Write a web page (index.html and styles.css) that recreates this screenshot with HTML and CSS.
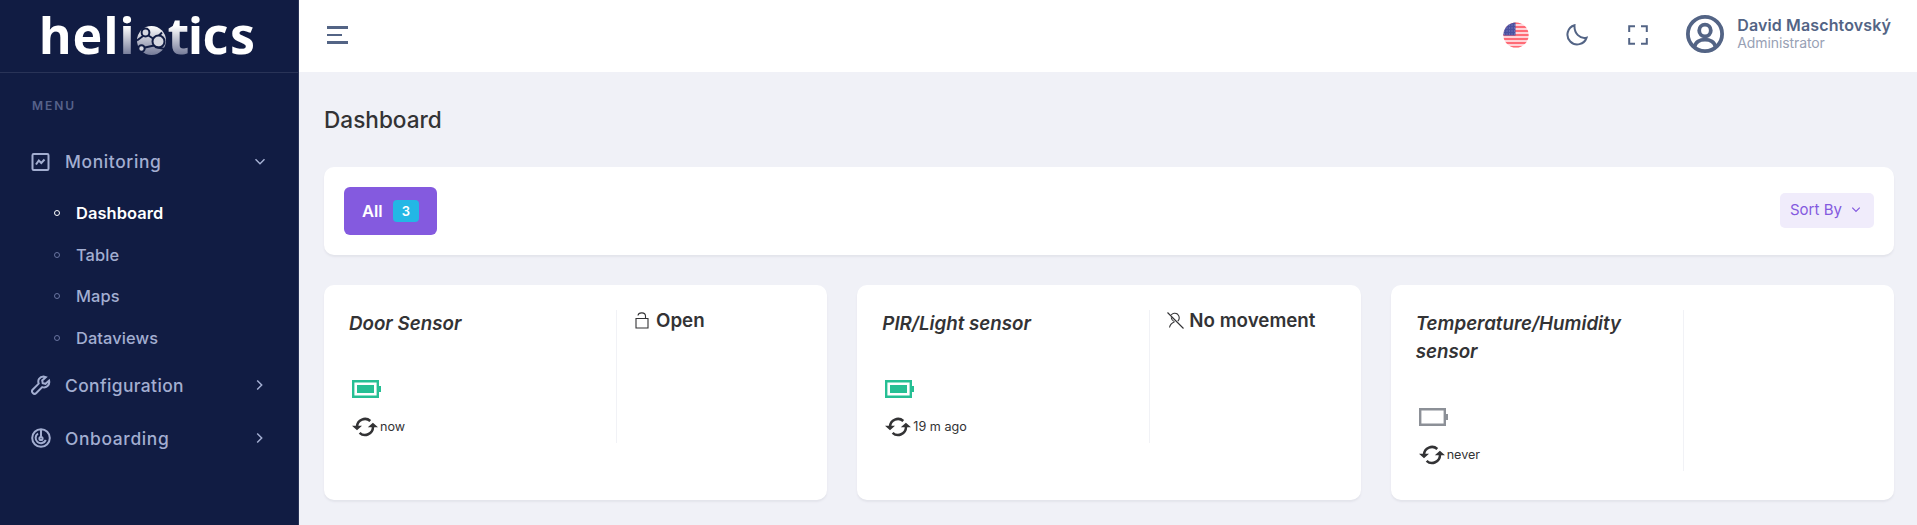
FILE: index.html
```html
<!DOCTYPE html>
<html lang="en">
<head>
<meta charset="utf-8">
<title>Heliotics Dashboard</title>
<link rel="stylesheet" href="styles.css">
</head>
<body>
<svg width="0" height="0" class="sprite" aria-hidden="true">
  <symbol id="chev" viewBox="0 0 12 12"><path d="M3.2 1.5 7.7 6 3.2 10.5" fill="none" stroke="currentColor" stroke-width="1.5"/></symbol>
  <symbol id="refresh" viewBox="0 0 26 20">
    <path d="M5 9.500A8 8 0 0 1 18.300 4M21 10A8 8 0 0 1 7.600 15.800" fill="none" stroke="currentColor" stroke-width="2.500"/>
    <path d="M0 8.800h10L5 13.200zM15.800 10.200h10.200L20.900 5.800z" fill="currentColor"/>
  </symbol>
  <symbol id="battery" viewBox="0 0 29 18"><path d="M1.200 1.200h24.600v15.600H1.200z" fill="none" stroke="currentColor" stroke-width="2.400"/><path d="M26 6h3v6h-3z" fill="currentColor"/></symbol>
</svg>
<div class="app">
  <aside class="sidebar">
    <div class="brand">
      <svg width="224" height="72" viewBox="36 0 224 72" class="logo">
        <defs><linearGradient id="fade" gradientUnits="userSpaceOnUse" x1="0" y1="26" x2="0" y2="55"><stop offset="0" stop-color="#fff"/><stop offset="1" stop-color="#747a98"/></linearGradient></defs>
        <text y="54" x="39 72.500 103.500">hel</text>
        <text y="54" x="119.500" fill="url(#fade)">i</text>
        <circle cx="151.500" cy="40.500" r="14.500" fill="url(#fade)"/>
        <g class="cells"><circle cx="145.500" cy="32.500" r="3.900"/><circle cx="158.500" cy="41.500" r="6"/><circle cx="141.500" cy="48.500" r="3.200"/><path d="M148.500 35.500 153 38.500M145 47.500 154 45.500M137 40.500 143 36M159 35.500 162 32.500M155 47 165 49" /></g>
        <text y="54" x="167.500" fill="url(#fade)">t</text>
        <text y="54" x="188 202.500 230">ics</text>
      </svg>
    </div>
    <nav class="menu">
      <div class="menu-title">MENU</div>
      <a class="item"><svg width="20" height="20" viewBox="0 0 20 20" class="ic"><rect x="1.500" y="2" width="16" height="16" rx="1.200"/><path d="M5 12.500 7.800 8.500 10.300 11 13.500 7.500"/></svg><span class="wide">Monitoring</span><svg class="arrow down" width="12" height="12"><use href="#chev"/></svg></a>
      <div class="sub">
        <a class="on"><i></i><span>Dashboard</span></a>
        <a><i></i><span>Table</span></a>
        <a><i></i><span>Maps</span></a>
        <a><i></i><span>Dataviews</span></a>
      </div>
      <a class="item"><svg width="20" height="20" viewBox="0 0 20 20" class="ic"><path d="M12.500 1.500C8.500 1.500 6.400 5.300 7.700 8.600L1.800 14.500a2.400 2.400 0 0 0 3.500 3.500l5.900-5.900c4 1.400 7.900-2.100 6.900-6.500l-3.600 3.200-2.800-.6-.5-2.800 3.600-3.200z"/></svg><span>Configuration</span><svg class="arrow" width="12" height="12"><use href="#chev"/></svg></a>
      <a class="item"><svg width="20" height="20" viewBox="0 0 20 20" class="ic"><circle cx="10" cy="10" r="8.800"/><path d="M10 1.500V10M7 5.500A5.300 5.300 0 1 0 14.800 12"/><circle cx="10" cy="10.500" r="1.600"/></svg><span class="wide">Onboarding</span><svg class="arrow" width="12" height="12"><use href="#chev"/></svg></a>
    </nav>
  </aside>
  <div class="main">
    <header class="topbar">
      <svg class="burger" width="21" height="18"><path d="M0 0h21v3H0zM0 8h15v2H0zM0 15h21v3H0z"/></svg>
      <div class="tools">
        <svg width="26" height="26" viewBox="0 0 26 26" class="flag"><defs><clipPath id="disc"><circle cx="13" cy="13" r="12.600"/></clipPath></defs><g clip-path="url(#disc)"><path d="M0 0h26v26H0z" fill="#ffd3d8"/><path d="M0 1h26M0 5h26M0 9h26M0 13h26M0 17h26M0 21h26M0 25h26" stroke="#ff6b76" stroke-width="2"/><path d="M0 0h12.500v13.500H0z" fill="#4b50a0"/><path d="M1 3h11M1 6h11M1 9h11M1 12h11" stroke="#8588c4" stroke-dasharray="1 1.500"/></g></svg>
        <svg width="22" height="22" viewBox="0 0 22 22" class="moon"><path d="M8.500 1.200A9.800 9.800 0 1 0 20.600 13.600C14 15.300 8 9.500 8.500 1.200z"/></svg>
        <svg width="20" height="20" viewBox="0 0 20 20" class="full"><path d="M1.200 7V1.200H7M13 1.200h5.800V7M18.800 13v5.800H13M7 18.800H1.200V13"/></svg>
        <svg width="38" height="38" viewBox="0 0 38 38" class="avatar"><circle cx="19" cy="19" r="17.100"/><circle cx="19" cy="15.500" r="5.800"/><path d="M8.500 32c1-5 5.500-7.300 10.500-7.300S28.500 27 29.500 32"/></svg>
        <div class="user"><b>David Maschtovský</b><span>Administrator</span></div>
      </div>
    </header>
    <main class="content">
      <h1>Dashboard</h1>
      <section class="card filters">
        <button class="all">All<span>3</span></button>
        <button class="sort">Sort By<svg width="10" height="10" class="down"><use href="#chev"/></svg></button>
      </section>
      <div class="cards">
        <section class="card device">
          <div class="left"><h2>Door Sensor</h2><svg class="bat ok" width="29" height="18"><use href="#battery"/><path d="M5 5h17v8H5z"/></svg><div class="seen"><svg width="26" height="20"><use href="#refresh"/></svg><span>now</span></div></div>
          <div class="right"><svg width="14" height="17" viewBox="0 0 14 17"><path d="M1 6.500h12v9.500H1zM3 3.500C3.500-.1 10.500-.1 10.500 4v2.500"/></svg><span>Open</span></div>
        </section>
        <section class="card device">
          <div class="left"><h2>PIR/Light sensor</h2><svg class="bat ok" width="29" height="18"><use href="#battery"/><path d="M5 5h17v8H5z"/></svg><div class="seen"><svg width="26" height="20"><use href="#refresh"/></svg><span>19 m ago</span></div></div>
          <div class="right person"><svg width="17" height="17" viewBox="0 0 17 17"><path d="M.5.500 16.500 16.500M4.200 3C5.500 1 8.500.500 10.700 2.300 13 4.500 12.500 7.500 10.800 9M4.200 5.500C4.500 8 6 9 7.500 9.700M7.500 9.700C4.500 11 3 12.500 2.500 15.500"/></svg><span>No movement</span></div>
        </section>
        <section class="card device">
          <div class="left"><h2>Temperature/Humidity sensor</h2><svg class="bat" width="29" height="18"><use href="#battery"/></svg><div class="seen"><svg width="26" height="20"><use href="#refresh"/></svg><span>never</span></div></div>
          <div class="right"></div>
        </section>
      </div>
    </main>
  </div>
</div>
</body>
</html>
```
FILE: styles.css
```css
* { box-sizing: border-box; }
body { margin: 0; background: #f0f1f7; color: #333335; font-family: Inter, "Liberation Sans", sans-serif; overflow: hidden; }
svg { display: block; flex: none; }
.sprite { position: absolute; }
.app { display: flex; height: 525px; }
.sidebar { width: 299px; flex: none; background: #111c43; border-right: 1px solid #293357; }
.brand { height: 73px; border-bottom: 1px solid #293357; padding-left: 36px; }
.logo { overflow: visible; }
.logo text { font: 700 50px/1 "Noto Sans", sans-serif; fill: #fff; }
.logo text[fill] { fill: url(#fade); }
.cells { stroke: #111c43; stroke-width: 2; fill: #d5d7e0; }
.menu { color: #a3aed1; padding-top: 23px; }
.menu-title { font-size: 12px; font-weight: 600; line-height: 20px; letter-spacing: 1.9px; color: #57628a; padding-left: 32px; margin-bottom: 19px; }
.item { display: flex; align-items: center; height: 53px; padding: 0 32px 0 31px; font-size: 17.4px; font-weight: 450; letter-spacing: .4px; }
.item span { margin-left: 14px; flex: 1; }
.item .wide { letter-spacing: .65px; }
.ic { fill: none; stroke: currentColor; stroke-width: 2; }
.down { transform: rotate(90deg); }
.sub { padding: 24px 0 0; margin-top: -20px; }
.sub a { display: flex; align-items: center; height: 41.7px; padding-left: 54px; font-size: 16.4px; font-weight: 450; letter-spacing: .1px; }
.sub i { width: 6px; height: 6px; border: 1px solid #6974a0; border-radius: 50%; margin-right: 16px; }
.sub .on { color: #fff; font-weight: 600; }
.sub .on i { border-color: #fff; }
.main { flex: 1; min-width: 0; }
.topbar { height: 72px; background: #fff; display: flex; align-items: center; justify-content: space-between; padding: 0 26px 0 28px; color: #536485; }
.burger { fill: currentColor; margin-top: -2px; }
.tools { display: flex; align-items: center; margin-top: -2px; }
.moon, .full, .avatar { fill: none; stroke: currentColor; stroke-width: 2; }
.avatar { stroke-width: 3.8; }
.moon { margin-left: 37px; }
.full { margin-left: 40px; }
.avatar { margin: -3px 13px 0 38px; }
.user { display: flex; flex-direction: column; margin-top: -3px; }
.user b { font-size: 16px; font-weight: 600; line-height: 18px; letter-spacing: .12px; }
.user span { font-size: 14px; line-height: 17px; color: #98a1b5; letter-spacing: -.1px; }
.content { padding: 0 23px 0 25px; }
h1 { font-size: 22.6px; font-weight: 540; line-height: 32px; margin: 32px 0 31px; }
.card { background: #fff; border-radius: 10px; box-shadow: 0 2px 2px #e3e4eb; }
.filters { height: 88px; display: flex; align-items: center; justify-content: space-between; padding: 0 20px; }
button { border: 0; font-family: inherit; display: flex; align-items: center; }
.all { width: 93px; height: 48px; border-radius: 6px; background: #845adf; color: #fff; font-size: 16.5px; font-weight: 600; padding: 0 18px 1px; justify-content: space-between; }
.all span { width: 26px; height: 22px; line-height: 22px; border-radius: 4px; background: #23b7e5; font-size: 13px; text-align: center; }
.sort { width: 94px; height: 35px; border-radius: 5px; background: #f0ecfb; color: #845adf; font-size: 15px; padding: 0 13px 2px 10px; justify-content: space-between; margin-top: -1px; }
.cards { display: grid; grid-template-columns: repeat(3, 1fr); gap: 30px; margin-top: 30px; }
.device { height: 215px; padding: 25px; display: flex; align-items: flex-start; }
.left { width: 268px; flex: none; border-right: 1px solid #f1f2f6; padding-bottom: 6px; }
h2 { font-size: 18.75px; font-weight: 600; font-style: italic; line-height: 28px; margin: 0; padding-right: 24px; }
.bat { color: #8c9097; margin: 42px 0 0 3px; }
.ok { color: #26bf94; fill: #26bf94; }
.seen { display: flex; align-items: center; height: 20px; font-size: 12.6px; margin: 19px 0 0 3px; }
.seen span { margin-left: 2px; margin-top: -1px; }
.right { display: flex; align-items: center; height: 21px; padding-left: 18px; font-size: 18.75px; font-weight: 600; white-space: nowrap; }
.right svg { fill: none; stroke: #333335; stroke-width: 1.1; margin-right: 7px; }
.right.person { padding-left: 17px; }
.right.person svg { margin-right: 5px; }
```
